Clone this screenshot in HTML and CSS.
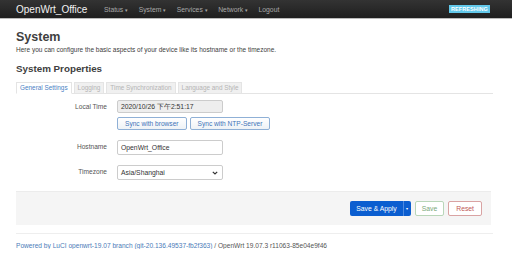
FILE: index.html
```html
<!DOCTYPE html>
<html>
<head>
<meta charset="utf-8">
<link rel="stylesheet" href="styles.css">
</head>
<body>
<header class="topbar">
  <div class="brand">OpenWrt_Office</div>
  <nav class="menu">
    <span class="item">Status <span class="caret">▾</span></span>
    <span class="item">System <span class="caret">▾</span></span>
    <span class="item">Services <span class="caret">▾</span></span>
    <span class="item">Network <span class="caret">▾</span></span>
    <span class="item">Logout</span>
  </nav>
  <div class="spacer"></div>
  <span class="badge">REFRESHING</span>
</header>
<main class="container">
  <h1 class="title">System</h1>
  <p class="desc">Here you can configure the basic aspects of your device like its hostname or the timezone.</p>
  <h2 class="subtitle">System Properties</h2>
  <div class="tabs">
    <span class="tab active">General Settings</span>
    <span class="tab">Logging</span>
    <span class="tab">Time Synchronization</span>
    <span class="tab">Language and Style</span>
  </div>
  <div class="form">
    <div class="row">
      <label class="lbl">Local Time</label>
      <div class="field">
        <div class="input ro">2020/10/26 下午2:51:17</div>
        <div class="btns">
          <span class="btn">Sync with browser</span>
          <span class="btn">Sync with NTP-Server</span>
        </div>
      </div>
    </div>
    <div class="row">
      <label class="lbl">Hostname</label>
      <div class="field"><div class="input">OpenWrt_Office</div></div>
    </div>
    <div class="row">
      <label class="lbl">Timezone</label>
      <div class="field"><div class="input select">Asia/Shanghai<svg class="chev" width="6" height="4" viewBox="0 0 6 4"><path d="M0.8 0.8 L3 3 L5.2 0.8" fill="none" stroke="#333" stroke-width="1.2"/></svg></div></div>
    </div>
  </div>
  <div class="actions">
    <span class="split"><span class="apply">Save &amp; Apply</span><span class="drop">▾</span></span>
    <span class="abtn save">Save</span>
    <span class="abtn reset">Reset</span>
  </div>
  <footer class="footer"><span class="link">Powered by LuCI openwrt-19.07 branch (git-20.136.49537-fb2f363)</span> / OpenWrt 19.07.3 r11063-85e04e9f46</footer>
</main>
</body>
</html>
```
FILE: styles.css
```css
* { box-sizing: border-box; }
body {
  margin: 0;
  font-family: "Liberation Sans", Arial, sans-serif;
  font-size: 6.6px;
  color: #404040;
  background: #fff;
}
.topbar {
  height: 19px;
  background: linear-gradient(#333, #1f1f1f);
  display: flex;
  align-items: center;
  padding: 0 22px 0 16px;
  border-bottom: 1px solid #bbb;
}
.brand {
  color: #f2f2f2;
  font-size: 10px;
  width: 88px;
}
.menu { display: flex; gap: 10.5px; }
.item { color: #a8a8a8; font-size: 6.8px; }
.caret { font-size: 5px; }
.spacer { flex: 1; }
.badge {
  background: #62c8ea;
  color: #fff;
  font-size: 5.5px;
  font-weight: bold;
  padding: 1px 2px;
  letter-spacing: 0.1px;
}
.container { padding: 0 19px 0 16px; }
.title {
  font-size: 12.5px;
  font-weight: bold;
  margin: 11px 0 0;
  color: #404040;
  line-height: 15px;
}
.desc { margin: 1px 0 0; font-size: 6.5px; line-height: 8px; color: #404040; }
.subtitle {
  font-size: 9.8px;
  font-weight: bold;
  margin: 9px 0 0;
  line-height: 12px;
  color: #404040;
}
.tabs {
  display: flex;
  gap: 2px;
  margin-top: 7px;
  border-bottom: 1px solid #e4e4e4;
  height: 12px;
}
.tab {
  font-size: 6.4px;
  color: #b5b5b5;
  background: #f0f0f0;
  border: 1px solid #e4e4e4;
  padding: 0 3px;
  height: 12px;
  line-height: 10px;
}
.tab.active {
  color: #4b82c4;
  background: #fff;
  border-bottom-color: #fff;
}
.form { padding: 6px 0 11px; display: flex; flex-direction: column; gap: 10px; }
.row { display: flex; }
.lbl { width: 101px; text-align: right; padding-right: 10px; padding-top: 3px; color: #555; font-size: 6.6px; }
.field { display: flex; flex-direction: column; gap: 4px; }
.input {
  width: 106px;
  height: 15px;
  border: 1px solid #ccc;
  border-radius: 2px;
  padding: 0 3px;
  font-size: 6.8px;
  color: #333;
  background: #fff;
  display: flex;
  align-items: center;
}
.input.ro { background: #eee; height: 13px; }
.select { justify-content: space-between; padding-right: 4px; }
.btns { display: flex; gap: 3px; }
.btn {
  border: 1px solid #8fb0d6;
  border-radius: 2px;
  color: #3f74b8;
  background: linear-gradient(#fff, #eef2f6);
  font-size: 6.6px;
  height: 13px;
  display: flex;
  align-items: center;
  padding: 0 7px;
}
.actions {
  background: #f5f5f5;
  border-top: 1px solid #ececec;
  height: 34px;
  display: flex;
  justify-content: flex-end;
  align-items: center;
  padding-right: 9px;
  margin-right: 2px;
  gap: 4px;
}
.split { display: flex; }
.apply {
  background: #0b5ed0;
  color: #fff;
  height: 15px;
  padding: 0 6px;
  display: flex;
  align-items: center;
  border-radius: 2px 0 0 2px;
  font-size: 6.8px;
}
.drop {
  background: #0b5ed0;
  color: #fff;
  height: 15px;
  width: 8px;
  display: flex;
  align-items: center;
  justify-content: center;
  border-left: 1px solid #4d8ae0;
  border-radius: 0 2px 2px 0;
  font-size: 4px;
}
.abtn {
  height: 15px;
  display: flex;
  align-items: center;
  padding: 0 6px;
  border-radius: 2px;
  font-size: 6.8px;
  background: #fff;
}
.save { border: 1px solid #b9d6b9; color: #7aa87a; }
.reset { border: 1px solid #d9a3a3; color: #c05858; padding: 0 7px; }
.footer {
  margin-top: 8px;
  border-top: 1px solid #eee;
  padding-top: 8px;
  font-size: 6.6px;
  color: #555;
}
.link { color: #4b7cb8; }
```
